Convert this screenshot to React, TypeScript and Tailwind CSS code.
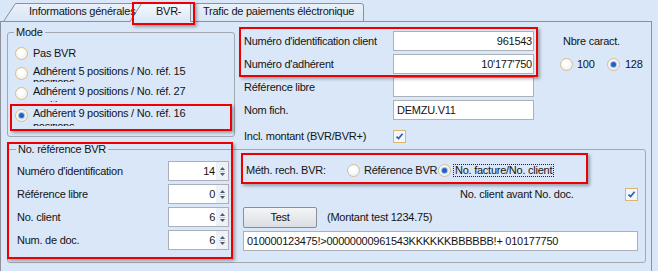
import React from "react";

function Radio({ checked = false, className = "" }: { checked?: boolean; className?: string }) {
  return (
    <span
      className={
        "flex h-[13px] w-[13px] shrink-0 items-center justify-center rounded-full border border-[#d8bf88] bg-[radial-gradient(circle_at_45%_40%,#ffffff_20%,#e4eaf1_100%)] " +
        className
      }
    >
      {checked && <span className="h-[5px] w-[5px] rounded-full bg-[#2060c4] shadow-[0_0_1px_1px_#9dbde9]" />}
    </span>
  );
}

function Check() {
  return (
    <span className="flex h-[13px] w-[13px] shrink-0 items-center justify-center border border-[#dcb66c] bg-[#f3f6fa]">
      <svg width="9" height="9" viewBox="0 0 9 9">
        <path d="M1.5 4.6 L3.6 6.6 L7.6 1.8" stroke="#2b5fb8" strokeWidth="1.7" fill="none" />
      </svg>
    </span>
  );
}

function Spin({ v }: { v: string }) {
  return (
    <div className="flex h-[20px] w-[61px] border border-[#a9b0b9] bg-white">
      <div className="flex-1 pr-[1px] text-right leading-[18px]">{v}</div>
      <div className="flex w-[12px] flex-col bg-[#eef1f5]">
        <div className="flex h-[9px] items-end justify-center pb-[1px]">
          <svg width="5" height="3" viewBox="0 0 5 3">
            <path d="M0 3 L2.5 0 L5 3 Z" fill="#4a5a70" />
          </svg>
        </div>
        <div className="mx-auto h-px w-[6px] bg-[#c7ccd3]" />
        <div className="flex h-[8px] items-start justify-center pt-[1px]">
          <svg width="5" height="3" viewBox="0 0 5 3">
            <path d="M0 0 L5 0 L2.5 3 Z" fill="#4a5a70" />
          </svg>
        </div>
      </div>
    </div>
  );
}

function Frag({ text, h, off }: { text: string; h: string; off: string }) {
  return (
    <div className={"overflow-hidden " + h}>
      <div className={off + " whitespace-nowrap leading-[13px]"}>{text}</div>
    </div>
  );
}

export default function App() {
  return (
    <div className="relative h-[271px] w-[658px] overflow-hidden bg-[#d9e7f8] font-[family-name:Liberation_Sans,Arial,sans-serif] text-[11px] leading-[13px] tracking-[-0.25px] text-[#141414]">
      {/* Tab strip */}
      <div className="relative h-[21px]">
        <svg className="absolute left-0 top-0" width="658" height="23" viewBox="0 0 658 23">
          <defs>
            <linearGradient id="tg" x1="0" y1="0" x2="0" y2="1">
              <stop offset="0" stopColor="#eaf1fa" />
              <stop offset="1" stopColor="#d9e6f6" />
            </linearGradient>
            <linearGradient id="sg" x1="0" y1="0" x2="0" y2="1">
              <stop offset="0" stopColor="#f7fafd" />
              <stop offset="1" stopColor="#d9e7f8" />
            </linearGradient>
          </defs>
          <path d="M3.5 21.5 L15.5 3.5 L145 3.5 L145 21.5 Z" fill="url(#tg)" />
          <path d="M3.5 21.5 L15.5 3.5 L145 3.5" fill="none" stroke="#8b9099" />
          <path d="M194.5 21.5 V6 Q194.5 3.5 197 3.5 H361 Q363.5 3.5 363.5 6 V21.5 Z" fill="url(#tg)" />
          <path d="M194.5 21.5 V6 Q194.5 3.5 197 3.5 H361 Q363.5 3.5 363.5 6 V21.5" fill="none" stroke="#8b9099" />
          <path d="M130 22.5 L142 2.5 H188 Q190.5 2.5 190.5 5 V22.5 Z" fill="url(#sg)" />
          <path d="M130 21.5 L142.2 2.5 H188 Q190.5 2.5 190.5 5 V21.5" fill="none" stroke="#8b9099" />
          <path d="M0 21.5 H130.5 M190.5 21.5 H651.5" fill="none" stroke="#8b9099" />
        </svg>
        <div className="relative flex pl-[29px] pt-[5px] whitespace-nowrap">
          <span className="w-[127px]">Informations générales</span>
          <span className="w-[47px]">BVR-</span>
          <span>Trafic de paiements éléctronique</span>
        </div>
      </div>

      {/* Page */}
      <div className="h-[250px] w-[652px] border-x border-[#8b9099] pl-[6px] pt-px">
        {/* Top section */}
        <div className="flex h-[121px] items-start">
          <fieldset className="mt-[4px] h-[111px] w-[228px] rounded-[3px] border border-[#a3a8ae] pl-[7px]">
            <legend className="px-[2px] leading-[13px] -ml-[1px]">Mode</legend>
            <div className="mt-[8px] flex h-[14px] items-start gap-[5px]">
              <Radio />
              <span>Pas BVR</span>
            </div>
            <div className="mt-[4px] flex items-start gap-[5px]">
              <Radio className="mt-[2px]" />
              <div>
                <div className="whitespace-nowrap">Adhérent 5 positions / No. réf. 15</div>
                <div className="mt-[2px]">
                  <Frag text="positions" h="h-[2px]" off="-mt-[4px]" />
                </div>
              </div>
            </div>
            <div className="mt-[3px] flex items-start gap-[5px]">
              <Radio className="mt-[2px]" />
              <div>
                <div className="whitespace-nowrap">Adhérent 9 positions / No. réf. 27</div>
                <div className="mt-[3px]">
                  <Frag text="positions" h="h-[1px]" off="-mt-[2px]" />
                </div>
              </div>
            </div>
            <div className="mt-[5px] flex items-start gap-[5px]">
              <Radio checked className="mt-[2px]" />
              <div>
                <div className="whitespace-nowrap">Adhérent 9 positions / No. réf. 16</div>
                <div className="mt-[4px]">
                  <Frag text="positions" h="h-[2px]" off="-mt-[4px]" />
                </div>
              </div>
            </div>
          </fieldset>

          <div className="ml-[9px] mt-[9px]">
            <div className="grid grid-cols-[149px_141px_auto] gap-y-[3px] whitespace-nowrap">
              <div className="flex h-[20px] items-center">Numéro d'identification client</div>
              <div className="h-[20px] border border-[#abb1b9] bg-white pr-[1px] text-right leading-[18px]">961543</div>
              <div className="flex h-[20px] items-center pl-[29px]">Nbre caract.</div>

              <div className="flex h-[20px] items-center">Numéro d'adhérent</div>
              <div className="h-[20px] border border-[#abb1b9] bg-white pr-[1px] text-right leading-[18px]">10'177'750</div>
              <div className="flex h-[20px] items-center pl-[26px]">
                <Radio />
                <span className="ml-[4px] w-[30px]">100</span>
                <Radio checked />
                <span className="ml-[5px]">128</span>
              </div>

              <div className="flex h-[20px] items-center">Référence libre</div>
              <div className="h-[20px] border border-[#abb1b9] bg-white" />
              <div />

              <div className="flex h-[20px] items-center">Nom fich.</div>
              <div className="h-[20px] border border-[#abb1b9] bg-white pl-[3px] leading-[18px]">DEMZU.V11</div>
              <div />
            </div>
            <div className="mt-[10px] flex h-[13px] items-center">
              <span className="w-[149px] whitespace-nowrap">Incl. montant (BVR/BVR+)</span>
              <Check />
            </div>
          </div>
        </div>

        {/* Bottom group */}
        <fieldset className="h-[120px] w-[639px] rounded-[3px] border border-[#a3a8ae] pl-[9px]">
          <legend className="-ml-[1px] px-[2px] leading-[13px]">No. référence BVR</legend>
          <div className="flex items-start">
            <div className="flex flex-col gap-[3px] pt-[5px]">
              {[
                ["Numéro d'identification", "14"],
                ["Référence libre", "0"],
                ["No. client", "6"],
                ["Num. de doc.", "6"],
              ].map(([l, v]) => (
                <div key={l} className="flex h-[20px] items-center">
                  <span className="w-[151px] whitespace-nowrap">{l}</span>
                  <Spin v={v} />
                </div>
              ))}
            </div>

            <div className="ml-[14px] w-[395px] whitespace-nowrap">
              <div className="mt-[7px] flex h-[14px] items-center">
                <span className="w-[104px] pl-[3px]">Méth. rech. BVR:</span>
                <Radio />
                <span className="ml-[4px] w-[74px]">Référence BVR</span>
                <Radio checked />
                <span className="ml-[2px] border border-dotted border-[#222] px-px leading-[11px]">No. facture/No. client</span>
              </div>
              <div className="mt-[10px] flex h-[14px] items-center justify-between">
                <span className="pl-[217px]">No. client avant No. doc.</span>
                <Check />
              </div>
              <div className="mt-[6px] flex h-[21px] items-center">
                <button className="flex h-[21px] w-[74px] items-center justify-center rounded-[2px] border border-[#8a8f96] bg-[linear-gradient(#f4f5f7,#dadde2)] text-[11px] text-[#141414]">
                  Test
                </button>
                <span className="ml-[10px]">(Montant test 1234.75)</span>
              </div>
              <div className="mt-[3px] h-[20px] w-[395px] border border-[#abb1b9] bg-white pl-[3px] leading-[18px]">
                010000123475!&gt;00000000961543KKKKKKBBBBBB!+ 010177750
              </div>
            </div>
          </div>
        </fieldset>
      </div>

      {/* Red annotation boxes */}
      <div className="absolute left-[132px] top-[2px] h-[23px] w-[63px] border-2 border-[#ee0000] shadow-[2px_2px_3px_rgba(0,0,0,0.3)]" />
      <div className="absolute left-[239px] top-[27px] h-[50px] w-[299px] border-2 border-[#ee0000] shadow-[2px_2px_3px_rgba(0,0,0,0.3)]" />
      <div className="absolute left-[10px] top-[104px] h-[27px] w-[222px] border-2 border-[#ee0000] shadow-[2px_2px_3px_rgba(0,0,0,0.3)]" />
      <div className="absolute left-[7px] top-[142px] h-[117px] w-[226px] border-2 border-[#ee0000] shadow-[2px_2px_3px_rgba(0,0,0,0.3)]" />
      <div className="absolute left-[241px] top-[153px] h-[31px] w-[347px] border-2 border-[#ee0000] shadow-[2px_2px_3px_rgba(0,0,0,0.3)]" />
    </div>
  );
}
